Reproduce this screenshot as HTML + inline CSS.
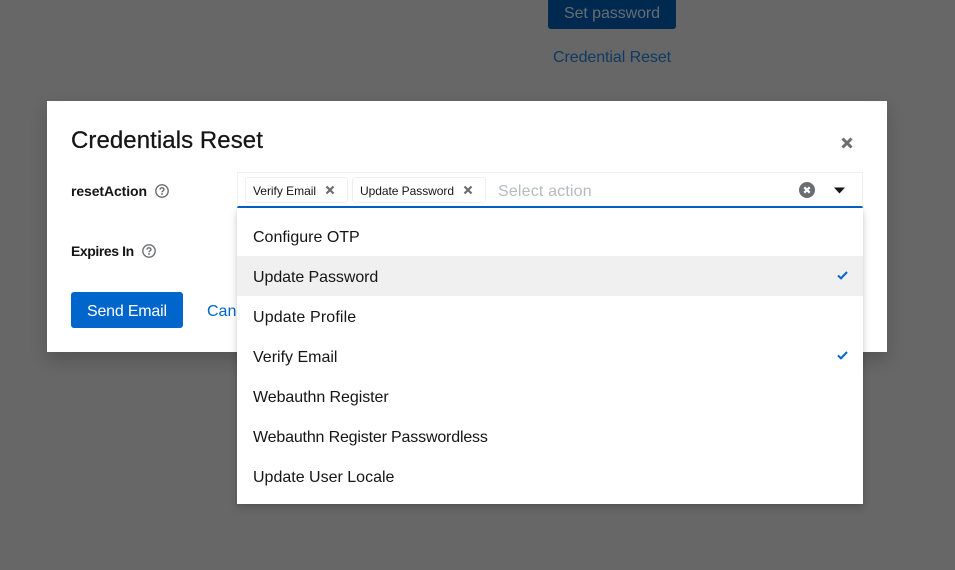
<!DOCTYPE html>
<html><head><meta charset="utf-8"><style>
html,body{margin:0;padding:0;width:955px;height:570px;overflow:hidden;background:#676767;font-family:"Liberation Sans",sans-serif}
.a{position:absolute;white-space:nowrap;line-height:20px}
.box{position:absolute;box-sizing:border-box}
.it{position:absolute;left:253px;font-size:16px;line-height:20px;color:#151515;white-space:nowrap}
svg{position:absolute;display:block}
</style></head><body>
<div class="box" style="left:548px;top:-10px;width:128px;height:39px;background:#00294f;border-radius:3px"></div>
<div class="a" style="left:564px;top:4px;font-size:16px;color:#666d75;letter-spacing:-.08px">Set password</div>
<div class="a" style="left:553px;top:48px;font-size:16px;color:#0e3a63;letter-spacing:-.07px">Credential Reset</div>

<div class="box" style="left:47px;top:101px;width:840px;height:251px;background:#fff;box-shadow:0 8px 16px rgba(3,3,3,.18)"></div>
<div class="a" style="left:71px;top:127px;font-size:24px;line-height:28px;color:#151515;letter-spacing:.07px;-webkit-text-stroke:.25px #151515">Credentials Reset</div>
<svg style="left:841px;top:137px" width="12" height="12" viewBox="0 0 12 12"><path d="M1.5 1.5L10.5 10.5M10.5 1.5L1.5 10.5" stroke="#6a6e73" stroke-width="3"/></svg>

<div class="a" style="left:71px;top:181px;font-size:14px;font-weight:700;color:#151515;letter-spacing:-.1px">resetAction</div>
<svg style="left:155px;top:184px" width="14" height="14" viewBox="0 0 14 14"><circle cx="7" cy="7" r="6.2" fill="none" stroke="#6a6e73" stroke-width="1.4"/><path d="M5 5.6C5 4.4 5.9 3.8 7 3.8S9 4.5 9 5.5C9 6.8 7 6.8 7 8.3" fill="none" stroke="#6a6e73" stroke-width="1.4"/><rect x="6.2" y="9.2" width="1.6" height="1.6" fill="#6a6e73"/></svg>
<div class="a" style="left:71px;top:241px;font-size:14px;font-weight:700;color:#151515;letter-spacing:-.42px">Expires In</div>
<svg style="left:142px;top:244px" width="14" height="14" viewBox="0 0 14 14"><circle cx="7" cy="7" r="6.2" fill="none" stroke="#6a6e73" stroke-width="1.4"/><path d="M5 5.6C5 4.4 5.9 3.8 7 3.8S9 4.5 9 5.5C9 6.8 7 6.8 7 8.3" fill="none" stroke="#6a6e73" stroke-width="1.4"/><rect x="6.2" y="9.2" width="1.6" height="1.6" fill="#6a6e73"/></svg>

<div class="box" style="left:71px;top:292px;width:112px;height:36px;background:#06c;border-radius:3px"></div>
<div class="a" style="left:87px;top:302px;font-size:16px;color:#fff;letter-spacing:-.2px">Send Email</div>
<div class="a" style="left:207px;top:302px;font-size:16px;color:#06c">Cancel</div>

<div class="box" style="left:237px;top:172px;width:626px;height:36px;background:#fff;border:1px solid #f0f0f0;border-bottom:2px solid #06c"></div>
<div class="box" style="left:245px;top:177px;width:103px;height:26px;background:#fff;border:1px solid #f0f0f0;border-radius:3px"></div>
<div class="a" style="left:253px;top:181px;font-size:12px;color:#151515;letter-spacing:-.03px">Verify Email</div>
<svg style="left:325px;top:185px" width="10" height="10" viewBox="0 0 10 10"><path d="M1.5 1.5L8.5 8.5M8.5 1.5L1.5 8.5" stroke="#6a6e73" stroke-width="2.2"/></svg>
<div class="box" style="left:352px;top:177px;width:134px;height:26px;background:#fff;border:1px solid #f0f0f0;border-radius:3px"></div>
<div class="a" style="left:360px;top:181px;font-size:12px;color:#151515;letter-spacing:-.05px">Update Password</div>
<svg style="left:463px;top:185px" width="10" height="10" viewBox="0 0 10 10"><path d="M1.5 1.5L8.5 8.5M8.5 1.5L1.5 8.5" stroke="#6a6e73" stroke-width="2.2"/></svg>
<div class="a" style="left:498px;top:182px;font-size:16px;color:#b8bbbe;letter-spacing:.17px">Select action</div>
<svg style="left:799px;top:182px" width="16" height="16" viewBox="0 0 16 16"><circle cx="8" cy="8" r="8" fill="#6a6e73"/><path d="M5.3 5.3L10.7 10.7M10.7 5.3L5.3 10.7" stroke="#fff" stroke-width="2.2"/></svg>
<svg style="left:834px;top:187px" width="11" height="7" viewBox="0 0 11 7"><path d="M0 .5H11L5.5 6.5Z" fill="#151515"/></svg>

<div class="box" style="left:237px;top:208px;width:626px;height:296px;background:#fff;box-shadow:0 4px 8px rgba(3,3,3,.16),0 0 4px rgba(3,3,3,.08)"></div>
<div class="box" style="left:237px;top:256px;width:626px;height:40px;background:#f0f0f0"></div>
<div class="it" style="top:228px">Configure OTP</div>
<div class="it" style="top:268px;letter-spacing:-.07px">Update Password</div>
<div class="it" style="top:308px;letter-spacing:.14px">Update Profile</div>
<div class="it" style="top:348px">Verify Email</div>
<div class="it" style="top:388px;letter-spacing:-.06px">Webauthn Register</div>
<div class="it" style="top:428px;letter-spacing:-.17px">Webauthn Register Passwordless</div>
<div class="it" style="top:468px">Update User Locale</div>
<svg style="left:837px;top:270px" width="11" height="10" viewBox="0 0 11 10"><path d="M1 5.5L4 8.3L10 2" fill="none" stroke="#06c" stroke-width="2"/></svg>
<svg style="left:837px;top:350px" width="11" height="10" viewBox="0 0 11 10"><path d="M1 5.5L4 8.3L10 2" fill="none" stroke="#06c" stroke-width="2"/></svg>
</body></html>
